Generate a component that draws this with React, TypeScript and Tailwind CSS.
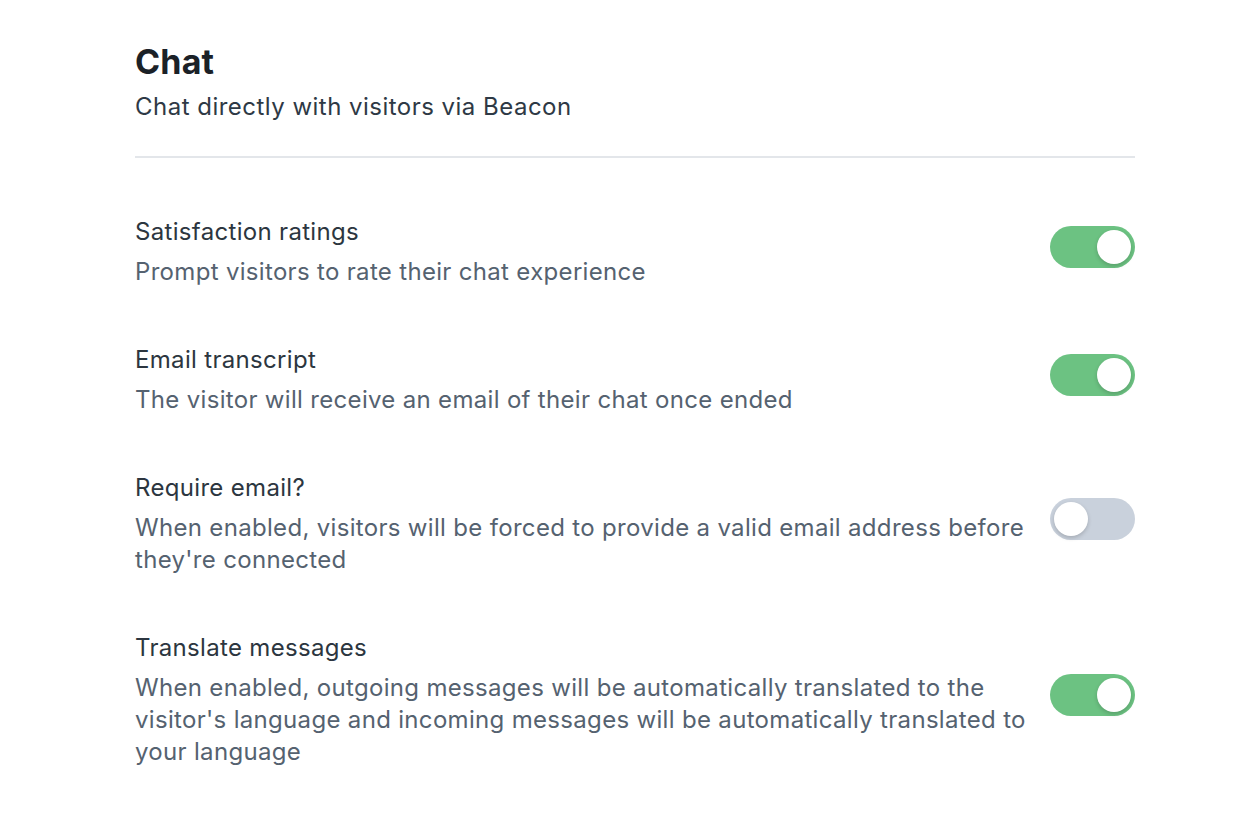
import { useState } from 'react'

const settings = [
  {
    title: 'Satisfaction ratings',
    desc: 'Prompt visitors to rate their chat experience',
    on: true,
  },
  {
    title: 'Email transcript',
    desc: 'The visitor will receive an email of their chat once ended',
    on: true,
  },
  {
    title: 'Require email?',
    desc: "When enabled, visitors will be forced to provide a valid email address before they're connected",
    on: false,
  },
  {
    title: 'Translate messages',
    desc: "When enabled, outgoing messages will be automatically translated to the visitor's language and incoming messages will be automatically translated to your language",
    on: true,
  },
]

function Toggle({ on, onClick }: { on: boolean; onClick: () => void }) {
  return (
    <button
      onClick={onClick}
      className={`flex h-[42px] w-[85px] shrink-0 items-center rounded-full px-[4px] mb-[10px] ${
        on ? 'justify-end bg-[#6cc282]' : 'justify-start bg-[#c9d1dc]'
      }`}
    >
      <span className="h-[34px] w-[34px] rounded-full bg-white shadow-[0_2px_4px_rgba(0,0,0,0.18)]" />
    </button>
  )
}

export default function App() {
  const [values, setValues] = useState(settings.map((s) => s.on))

  return (
    <div className="min-h-screen bg-white font-['Inter',sans-serif]">
      <div className="ml-[135px] w-[1000px] pt-[40px]">
        {/* Header */}
        <h1 className="text-[34px] leading-[44px] font-bold tracking-[0.005em] text-[#1b2127]">Chat</h1>
        <p className="mt-[7px] text-[24px] leading-[32px] tracking-[0.02em] text-[#2e3945]">
          Chat directly with visitors via Beacon
        </p>
        <div className="mt-[33px] h-[2px] bg-[#e3e6ea]" />

        {/* Rows */}
        <div className="mt-[58px] flex flex-col gap-[56px]">
          {settings.map((s, i) => (
            <div key={s.title} className="flex items-center gap-[10px]">
              <div className="flex-1 tracking-[0.02em]">
                <div className="text-[24px] leading-[32px] text-[#2c3640]">{s.title}</div>
                <div className="mt-[8px] text-[24px] leading-[32px] text-[#556270]">{s.desc}</div>
              </div>
              <Toggle
                on={values[i]}
                onClick={() => setValues((v) => v.map((x, j) => (j === i ? !x : x)))}
              />
            </div>
          ))}
        </div>
      </div>
    </div>
  )
}
